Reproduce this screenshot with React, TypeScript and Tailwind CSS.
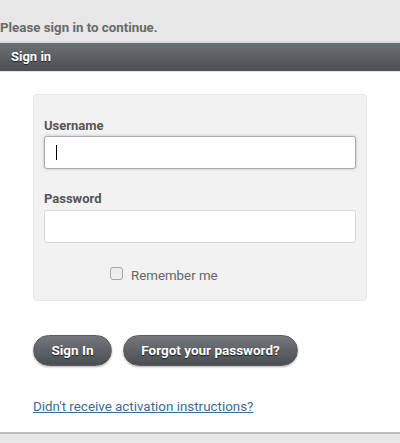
import React from 'react';

const App: React.FC = () => {
  return (
    <div className="w-[400px] h-[443px] flex flex-col bg-white font-['Roboto',sans-serif] overflow-hidden">
      {/* Notice */}
      <div className="h-[41px] bg-[#e7e7e8] flex items-end pb-[7px]">
        <p className="text-[13.3px] font-bold text-[#6a6a6a] leading-none">Please sign in to continue.</p>
      </div>
      <div className="h-[2px] bg-[#dadadb]" />

      {/* Header bar */}
      <div className="h-[29px] bg-gradient-to-b from-[#6c7075] to-[#4c5055] border-b border-[#e4e4e4] flex items-center px-[11px]">
        <h2 className="text-[13px] font-bold text-white [text-shadow:0_1px_1px_rgba(0,0,0,0.7)]">Sign in</h2>
      </div>

      <div className="flex-1 px-[33px] pt-[22px]">
        {/* Form panel */}
        <div className="w-[334px] h-[207px] bg-[#f2f2f2] border border-[#e6e6e6] rounded-[4px] px-[10px] pt-[24px]">
          <label className="block text-[13px] font-bold text-[#555] leading-none mb-[4px]">Username</label>
          <div className="h-[33px] bg-white border border-[#a9adb2] rounded-[3px] shadow-[0_0_3px_rgba(0,0,0,0.25)] flex items-center pl-[11px]">
            <span className="w-px h-[15px] bg-black" />
          </div>

          <label className="block text-[13px] font-bold text-[#555] leading-none mt-[23px] mb-[5px]">Password</label>
          <div className="h-[33px] bg-white border border-[#d6d8da] rounded-[3px]" />

          <div className="flex items-center gap-[8px] mt-[23px] pl-[66px]">
            <span className="w-[13px] h-[13px] border border-[#a5a5a5] rounded-[3px] bg-[#eeeeee] -translate-y-[2px]" />
            <span className="text-[13.3px] text-[#666]">Remember me</span>
          </div>
        </div>

        {/* Buttons */}
        <div className="flex gap-[11px] mt-[34px]">
          <button className="w-[79px] h-[31px] rounded-full bg-gradient-to-b from-[#74787d] to-[#4a4e53] border border-[#5a5e62] shadow-[0_1px_2px_rgba(0,0,0,0.3)] text-[13.5px] font-bold text-white [text-shadow:0_1px_1px_rgba(0,0,0,0.7)]">
            Sign In
          </button>
          <button className="w-[175px] h-[31px] rounded-full bg-gradient-to-b from-[#74787d] to-[#4a4e53] border border-[#5a5e62] shadow-[0_1px_2px_rgba(0,0,0,0.3)] text-[13.5px] font-bold text-white [text-shadow:0_1px_1px_rgba(0,0,0,0.7)]">
            Forgot your password?
          </button>
        </div>

        <a href="#" className="block mt-[34px] text-[13.4px] text-[#3d6b91] underline leading-none">
          Didn't receive activation instructions?
        </a>
      </div>

      {/* Footer */}
      <div className="h-[11px] bg-[#e7e7e8] border-t-2 border-[#bdbdbd]" />
    </div>
  );
};

export default App;
